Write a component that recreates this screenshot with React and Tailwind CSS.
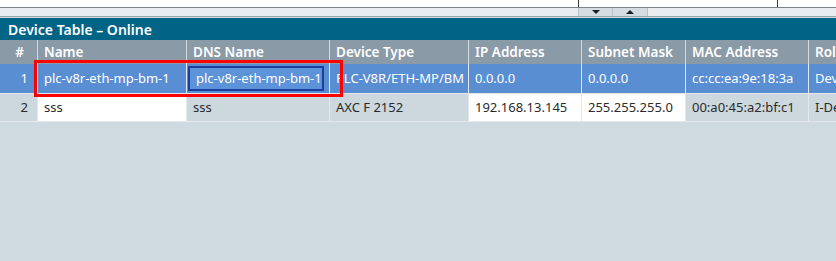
import React from "react";

const cols = [
  { key: "num", label: "#", w: "w-[38px] shrink-0", right: true },
  { key: "name", label: "Name", w: "w-[149px] shrink-0" },
  { key: "dns", label: "DNS Name", w: "w-[143px] shrink-0" },
  { key: "type", label: "Device Type", w: "w-[139px] shrink-0" },
  { key: "ip", label: "IP Address", w: "w-[113px] shrink-0" },
  { key: "mask", label: "Subnet Mask", w: "w-[104px] shrink-0" },
  { key: "mac", label: "MAC Address", w: "w-[123px] shrink-0" },
  { key: "role", label: "Role", w: "w-[60px] shrink-0" },
];

const rows = [
  {
    num: "1",
    name: "plc-v8r-eth-mp-bm-1",
    dns: "plc-v8r-eth-mp-bm-1",
    type: "PLC-V8R/ETH-MP/BM",
    ip: "0.0.0.0",
    mask: "0.0.0.0",
    mac: "cc:cc:ea:9e:18:3a",
    role: "Device",
    selected: true,
  },
  {
    num: "2",
    name: "sss",
    dns: "sss",
    type: "AXC F 2152",
    ip: "192.168.13.145",
    mask: "255.255.255.0",
    mac: "00:a0:45:a2:bf:c1",
    role: "I-Device",
    // editable cells are white
    white: ["name", "ip", "mask"],
  },
];

function Toolbar() {
  return (
    <div>
      <div className="relative h-[7px] bg-white">
        <div className="absolute left-[578px] top-0 h-full w-px bg-[#3a3d40]" />
        <div className="absolute left-[777px] top-0 h-full w-px bg-[#3a3d40]" />
      </div>
      <div className="h-px bg-[#7d8389]" />
      <div className="flex h-[8px] bg-[#e8ecef]">
        <div className="w-[578px] shrink-0" />
        <div className="flex w-[35px] shrink-0 items-center justify-center border-x border-[#b9c1c8] bg-[#d5dce2]">
          <span className="h-0 w-0 border-x-[4px] border-t-[4px] border-x-transparent border-t-[#1e1e1e]" />
        </div>
        <div className="flex w-[35px] shrink-0 items-center justify-center border-r border-[#b9c1c8] bg-[#d5dce2]">
          <span className="h-0 w-0 border-x-[4px] border-b-[4px] border-x-transparent border-b-[#1e1e1e]" />
        </div>
      </div>
      <div className="h-px bg-[#9aa2a9]" />
    </div>
  );
}

export default function App() {
  return (
    <div className="h-[261px] w-[836px] overflow-hidden bg-[#cfd9e0] font-['Noto_Sans',sans-serif] text-[13px]">
      <Toolbar />
      <div className="mt-px flex h-[22px] items-center bg-[#006487] pl-[8px] text-[14px] font-semibold text-white">
        Device Table – Online
      </div>
      <div className="flex h-[24px] bg-[#8b9aa7] text-[13.5px] font-semibold text-white">
        {cols.map((c) => (
          <div
            key={c.key}
            className={`${c.w} flex items-center overflow-hidden whitespace-nowrap border-r border-[#d3dbe1] ${
              c.right ? "justify-end pr-[13px]" : "px-[6px]"
            }`}
          >
            {c.label}
          </div>
        ))}
      </div>
      <div className="relative">
        {rows.map((r) => (
          <div
            key={r.num}
            className={`flex ${r.selected ? "h-[30px] bg-[#5a8ed3] text-white" : "h-[28px] text-[#2b2b2b]"} border-b border-[#e3e8ec]`}
          >
            {cols.map((c) => {
              const white = r.white && r.white.includes(c.key);
              const editing = r.selected && c.key === "dns";
              return (
                <div
                  key={c.key}
                  className={`${c.w} flex items-center overflow-hidden whitespace-nowrap border-r border-[#e3e8ec] ${
                    c.right ? "justify-end pr-[9px]" : "pl-[6px]"
                  } ${!r.selected ? (white ? "bg-white" : "bg-[#ccd7de]") : ""}`}
                >
                  {editing ? (
                    <div className="-ml-[5px] mr-[1px] flex h-[25px] w-full items-center border-2 border-[#1b3f9c] bg-[#5d93d8] pl-[6px]">
                      {r[c.key]}
                    </div>
                  ) : (
                    r[c.key]
                  )}
                </div>
              );
            })}
          </div>
        ))}
        <div className="pointer-events-none absolute left-[34px] top-[-4px] h-[37px] w-[309px] border-[3px] border-[#ff0000]" />
      </div>
    </div>
  );
}
